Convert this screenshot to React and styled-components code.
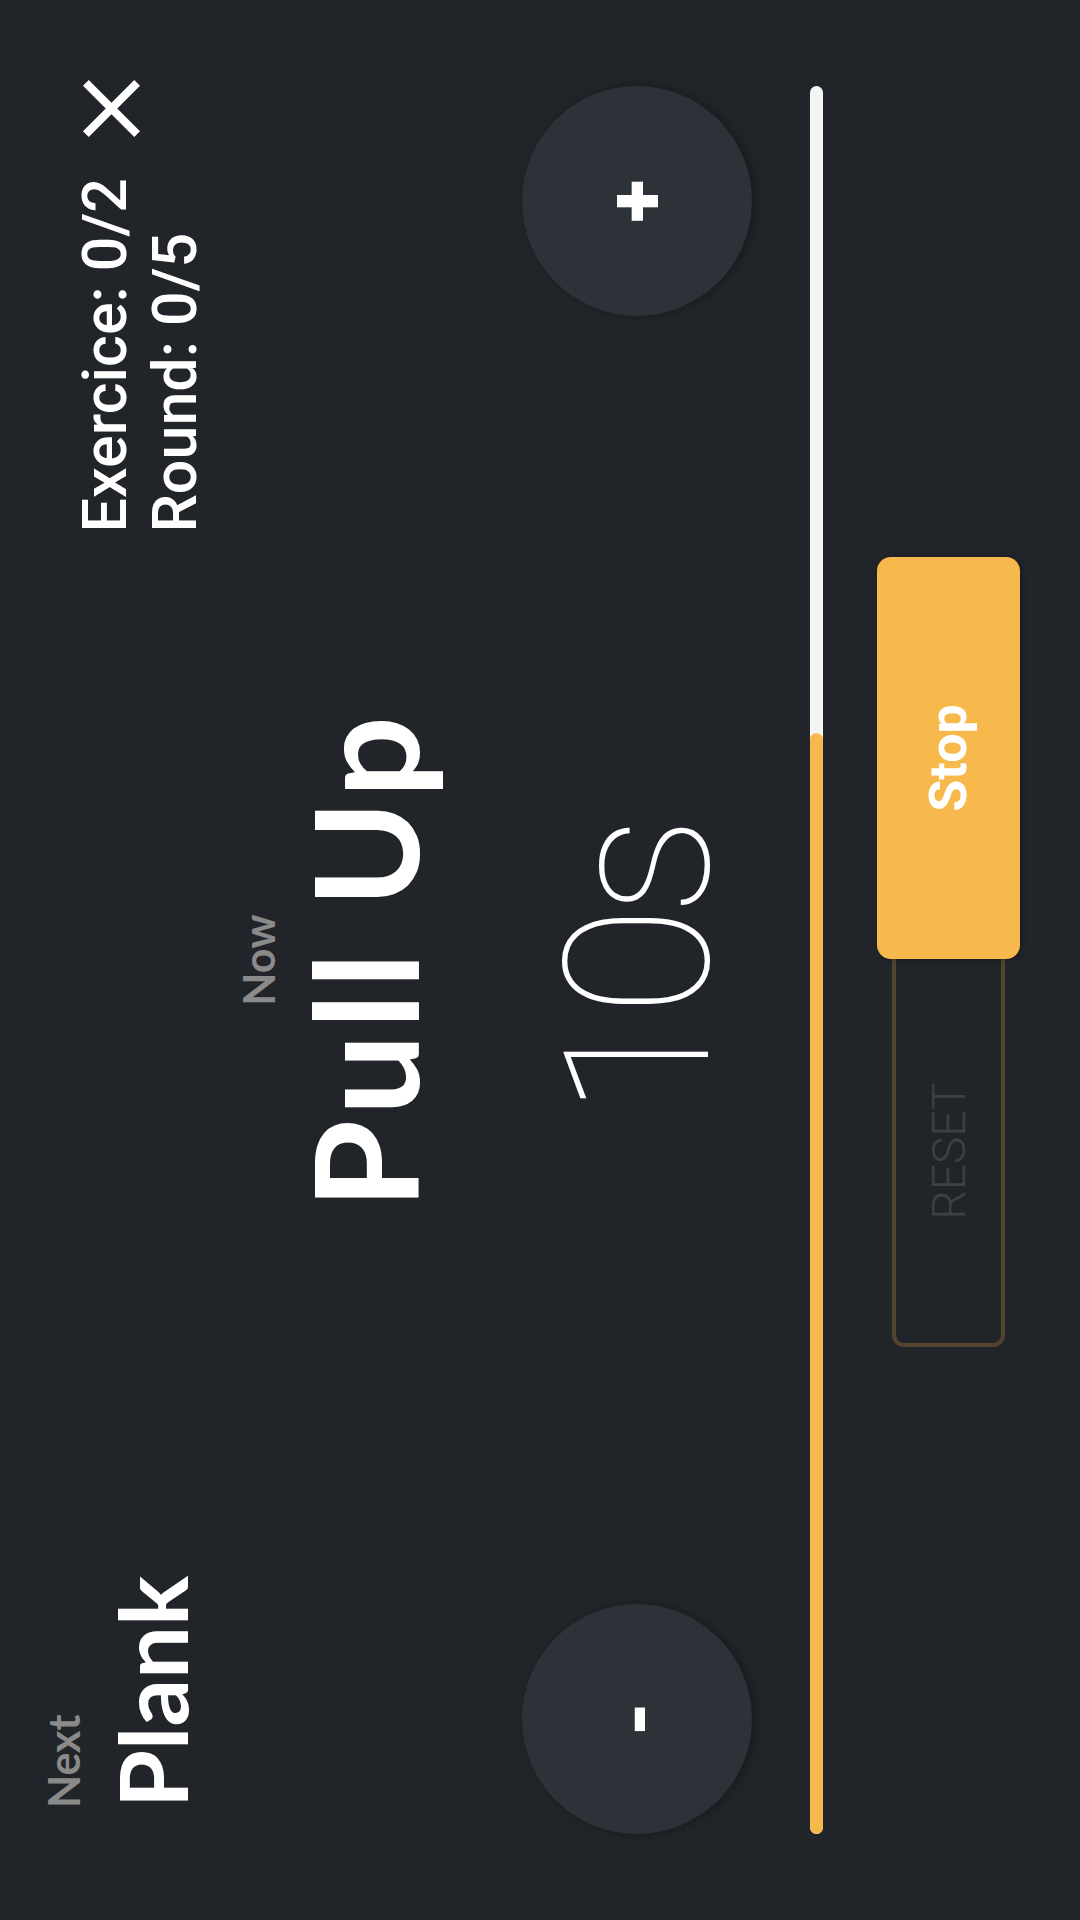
import React from 'react';
import styled, { createGlobalStyle } from 'styled-components';

const GlobalStyle = createGlobalStyle`
  html, body {
    margin: 0;
    padding: 0;
    background: #212429;
  }
  body {
    width: 1080px;
    height: 1920px;
    overflow: hidden;
  }
`;

const Viewport = styled.div`
  width: 1080px;
  height: 1920px;
  overflow: hidden;
  background: #212429;
`;

// the app runs in landscape; the phone shot is portrait, so the whole screen is turned
const Screen = styled.main`
  width: 1920px;
  height: 1080px;
  box-sizing: border-box;
  padding: 0 86px;
  transform-origin: top left;
  transform: translateY(1920px) rotate(-90deg);
  display: flex;
  flex-direction: column;
  font-family: Roboto, "Liberation Sans", sans-serif;
  color: #fff;
`;

const Header = styled.header`
  display: flex;
  align-items: flex-start;
  padding-top: 42px;
`;

const UpNext = styled.div`
  display: flex;
  flex-direction: column;
  gap: 20px;
  margin-left: 26px;
`;

const Label = styled.span`
  font-family: Lato, "Noto Sans", sans-serif;
  font-weight: 700;
  font-size: 43px;
  line-height: 1;
  color: #8a8a8a;
`;

const NextName = styled.span`
  font-family: Lato, "Noto Sans", sans-serif;
  font-weight: 700;
  font-size: 94px;
  line-height: 1;
`;

const Stats = styled.div`
  margin-left: auto;
  margin-top: 28px;
  display: flex;
  flex-direction: column;
  font-size: 61px;
  font-weight: 500;
  line-height: 70px;
`;

const CloseButton = styled.button`
  margin: 41px -6px 0 41px;
  width: 57px;
  height: 57px;
  padding: 0;
  border: 0;
  background: none;
  display: flex;
`;

const Main = styled.section`
  display: flex;
  align-items: flex-start;
  margin-top: 27px;
`;

const RoundButton = styled.button`
  width: 230px;
  height: 230px;
  margin-top: 285px;
  flex-shrink: 0;
  border: 0;
  border-radius: 50%;
  background: #2c3238;
  box-shadow: 0 3px 10px rgba(0, 0, 0, 0.3);
  color: #fff;
  font-family: Roboto, sans-serif;
  font-weight: 900;
  font-size: 80px;
  line-height: 1;
  display: flex;
  align-items: center;
  justify-content: center;
  padding: 0;
`;

const Center = styled.div`
  flex: 1;
  display: flex;
  flex-direction: column;
  align-items: center;
`;

const Title = styled.h1`
  margin: 12px 0 0;
  font-family: Lato, "Noto Sans", sans-serif;
  font-weight: 700;
  font-size: 144px;
  line-height: 1;
  letter-spacing: 5px;
`;

const Timer = styled.div`
  margin: 102px 22px 0 0;
  font-family: Roboto, sans-serif;
  font-weight: 100;
  font-size: 202px;
  line-height: 1;
  letter-spacing: -10px;
`;

const Track = styled.div`
  margin-top: 58px;
  height: 13px;
  border-radius: 7px;
  background: #f4f4f4;
  display: flex;
`;

const Fill = styled.div`
  height: 100%;
  border-radius: 7px;
  background: #f8b94c;
`;

const Controls = styled.div`
  margin-top: 54px;
  margin-left: 16px;
  display: flex;
  align-items: center;
  justify-content: center;
`;

const ResetButton = styled.button`
  width: 388px;
  height: 113px;
  box-sizing: border-box;
  border: 4px solid #52442d;
  border-right: 0;
  border-radius: 12px 0 0 12px;
  background: transparent;
  color: #3d4044;
  font-family: Roboto, sans-serif;
  font-weight: 300;
  font-size: 46px;
  padding: 0;
`;

const StopButton = styled.button`
  width: 402px;
  height: 143px;
  border: 0;
  border-radius: 14px;
  background: #f8b94c;
  box-shadow: 0 2px 6px rgba(0, 0, 0, 0.25);
  color: #fff;
  font-family: Roboto, sans-serif;
  font-weight: 700;
  font-size: 52px;
  padding: 0;
`;

const CloseIcon = () => (
  <svg width="57" height="57" viewBox="5 5 14 14">
    <path
      fill="#fff"
      d="M19 6.41L17.59 5 12 10.59 6.41 5 5 6.41 10.59 12 5 17.59 6.41 19 12 13.41 17.59 19 19 17.59 13.41 12z"
    />
  </svg>
);

const workout = {
  now: 'Pull Up',
  next: 'Plank',
  seconds: 10,
  exercise: [0, 2],
  round: [0, 5],
  progress: 0.63,
};

export default function App() {
  return (
    <Viewport>
      <GlobalStyle />
      <Screen>
        <Header>
          <UpNext>
            <Label>Next</Label>
            <NextName>{workout.next}</NextName>
          </UpNext>
          <Stats>
            <span>Exercice: {workout.exercise[0]}/{workout.exercise[1]}</span>
            <span>Round: {workout.round[0]}/{workout.round[1]}</span>
          </Stats>
          <CloseButton aria-label="Close">
            <CloseIcon />
          </CloseButton>
        </Header>
        <Main>
          <RoundButton>-</RoundButton>
          <Center>
            <Label>Now</Label>
            <Title>{workout.now}</Title>
            <Timer>{workout.seconds}s</Timer>
          </Center>
          <RoundButton>+</RoundButton>
        </Main>
        <Track>
          <Fill style={{ width: `${workout.progress * 100}%` }} />
        </Track>
        <Controls>
          <ResetButton>RESET</ResetButton>
          <StopButton>Stop</StopButton>
        </Controls>
      </Screen>
    </Viewport>
  );
}
